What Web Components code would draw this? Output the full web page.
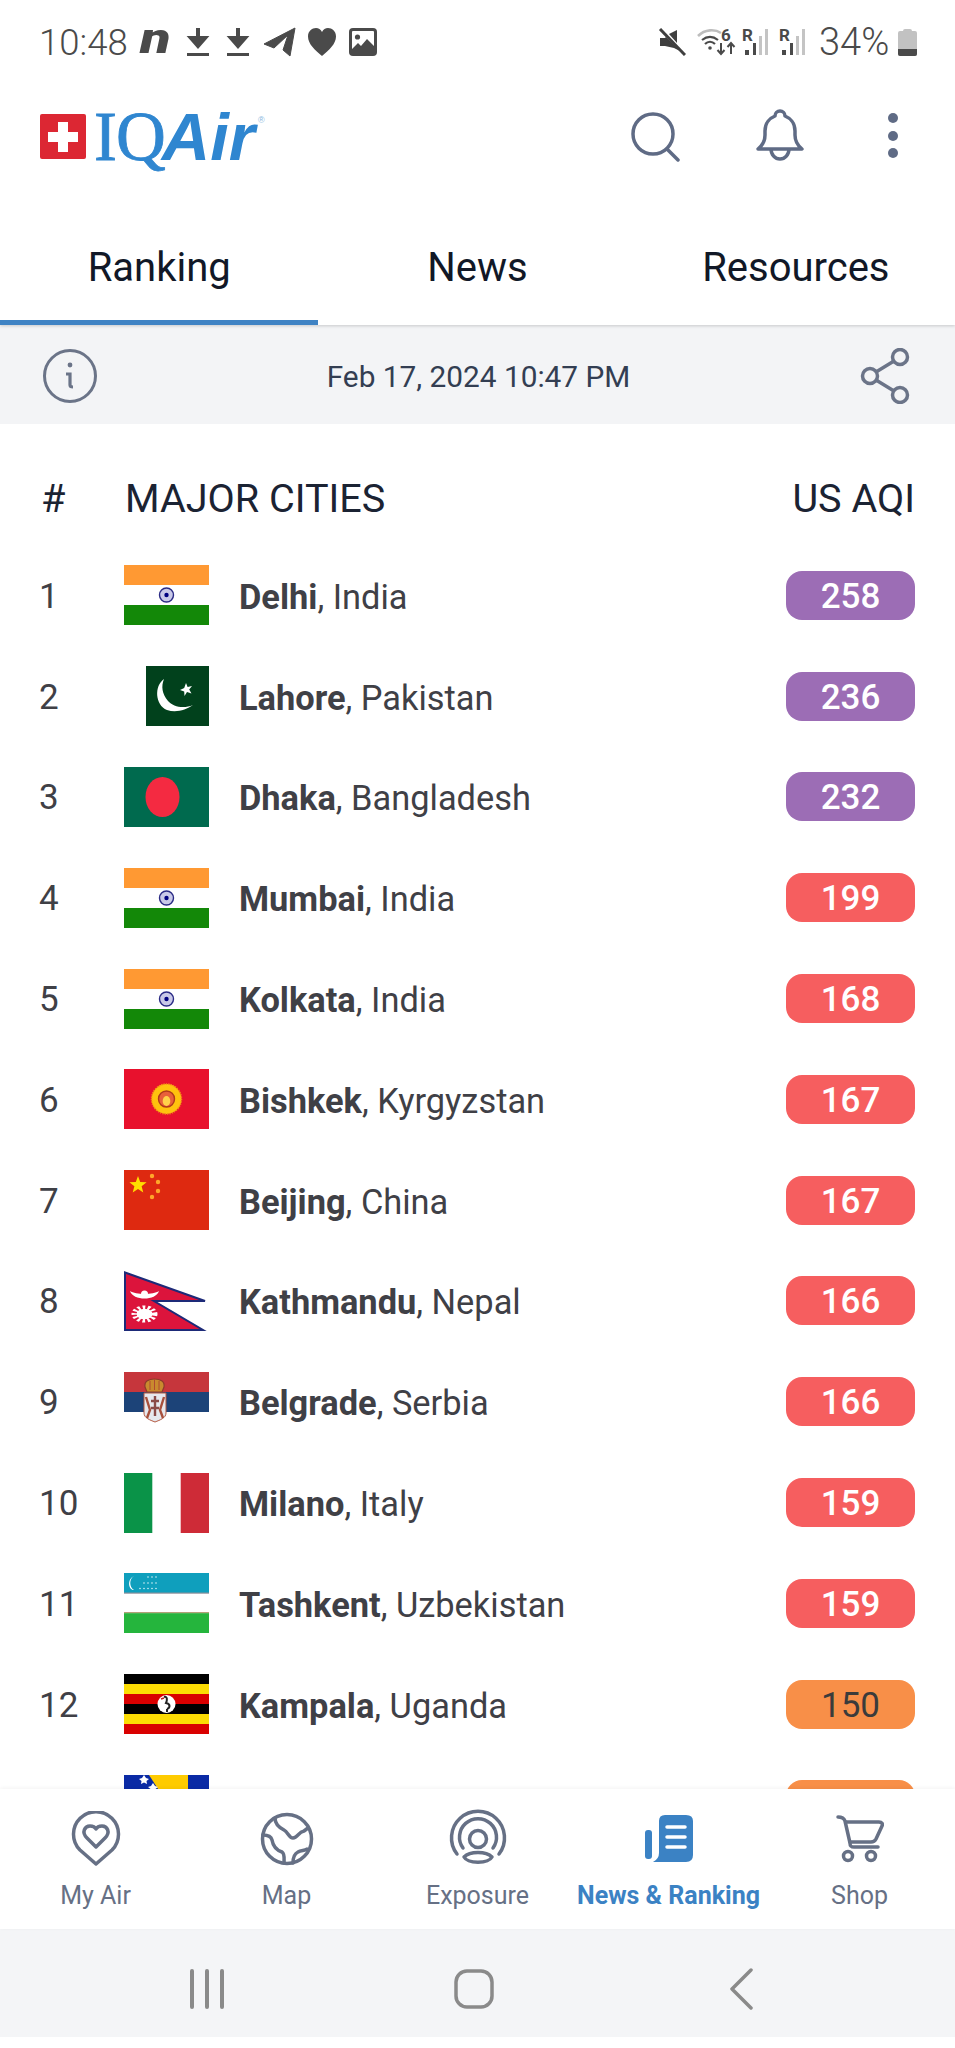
<!DOCTYPE html>
<html>
<head>
<meta charset="utf-8">
<title>IQAir ranking</title>
<style>
    html, body { margin: 0; padding: 0; background: #fff; }
    body { font-family: Roboto, "Liberation Sans", sans-serif; }
    app-screen { height: 2048px; }
</style>
</head>
<body>
<app-screen>
    <status-bar slot="status"></status-bar>
    <app-header slot="header"></app-header>
    <tab-bar slot="tabs"></tab-bar>
    <info-bar slot="info"></info-bar>
    <ranking-list slot="content">
        <city-row rank="1" flag="in" aqi="258" level="purple"><b>Delhi</b>, India</city-row>
        <city-row rank="2" flag="pk" aqi="236" level="purple"><b>Lahore</b>, Pakistan</city-row>
        <city-row rank="3" flag="bd" aqi="232" level="purple"><b>Dhaka</b>, Bangladesh</city-row>
        <city-row rank="4" flag="in" aqi="199" level="red"><b>Mumbai</b>, India</city-row>
        <city-row rank="5" flag="in" aqi="168" level="red"><b>Kolkata</b>, India</city-row>
        <city-row rank="6" flag="kg" aqi="167" level="red"><b>Bishkek</b>, Kyrgyzstan</city-row>
        <city-row rank="7" flag="cn" aqi="167" level="red"><b>Beijing</b>, China</city-row>
        <city-row rank="8" flag="np" aqi="166" level="red"><b>Kathmandu</b>, Nepal</city-row>
        <city-row rank="9" flag="rs" aqi="166" level="red"><b>Belgrade</b>, Serbia</city-row>
        <city-row rank="10" flag="it" aqi="159" level="red"><b>Milano</b>, Italy</city-row>
        <city-row rank="11" flag="uz" aqi="159" level="red"><b>Tashkent</b>, Uzbekistan</city-row>
        <city-row rank="12" flag="ug" aqi="150" level="orange"><b>Kampala</b>, Uganda</city-row>
        <city-row flag="ba" level="orange"></city-row>
    </ranking-list>
    <bottom-nav slot="nav"></bottom-nav>
    <system-nav slot="system"></system-nav>
</app-screen>

<script>
const FLAGS = {
    in: `<svg width="85" height="60" viewBox="0 0 85 60"><rect width="85" height="60" fill="#fff"/><rect width="85" height="20" fill="#ff9933"/><rect y="40" width="85" height="20" fill="#138808"/><circle cx="42.5" cy="30" r="7" fill="#c9c9e8" stroke="#2a2a85" stroke-width="1.4"/><circle cx="42.5" cy="30" r="2.2" fill="#000080"/></svg>`,
    pk: `<svg width="63" height="60" viewBox="0 0 63 60"><rect width="63" height="60" fill="#01411c"/><path d="M18 13 C8 20 9 39 21 44 C30 47 40 44 47 39 C38 43 27 41 22 35 C16 28 15 20 18 13 Z" fill="#fff"/><path d="M40 17 L41.6 21 L46 20 L43.2 23.5 L45.5 27.5 L41 26 L38.5 30 L38.2 25.5 L34 24 L38.2 22 Z" fill="#fff"/></svg>`,
    bd: `<svg width="85" height="60" viewBox="0 0 85 60"><rect width="85" height="60" fill="#006a4e"/><ellipse cx="38.5" cy="30" rx="17" ry="20" fill="#f42a41"/></svg>`,
    kg: `<svg width="85" height="60" viewBox="0 0 85 60"><rect width="85" height="60" fill="#e8112d"/><circle cx="42.5" cy="30" r="15" fill="#ffc20e" stroke="#f08a1a" stroke-width="1.5" stroke-dasharray="1.2 1.2"/><circle cx="42.5" cy="30" r="10.5" fill="#ffc20e"/><circle cx="42.5" cy="30" r="8" fill="#e8603a" stroke="#b03a1a" stroke-width="1.4"/><ellipse cx="42.5" cy="32" rx="3.8" ry="5" fill="#ffd24a"/></svg>`,
    cn: `<svg width="85" height="60" viewBox="0 0 85 60"><rect width="85" height="60" fill="#de2910"/><polygon points="14,6 16.2,12 22.6,12.3 17.6,16.3 19.3,22.5 14,19 8.7,22.5 10.4,16.3 5.4,12.3 11.8,12" fill="#ffde00"/><g fill="#ffa62a"><circle cx="28" cy="6" r="2.2"/><circle cx="34" cy="12" r="2.2"/><circle cx="34" cy="21" r="2.2"/><circle cx="28" cy="27" r="2.2"/></g></svg>`,
    np: `<svg width="85" height="60" viewBox="0 0 85 60"><path d="M1 1.5 L81 30 L30 30 L79 59 L1 59 Z" fill="#dc143c" stroke="#1d2a78" stroke-width="2"/><path d="M6 20 C12 24 29 24 35 20 C32 30 9 30 6 20 Z" fill="#fff"/><circle cx="20.5" cy="23" r="3.5" fill="#fff"/><g transform="translate(20.5 43) scale(1 .66)"><circle r="8" fill="#fff"/><circle r="10" fill="none" stroke="#fff" stroke-width="6" stroke-dasharray="2.6 2.4"/></g></svg>`,
    rs: `<svg width="85" height="60" viewBox="0 0 85 60"><rect width="85" height="60" fill="#fff"/><rect width="85" height="20" fill="#c6363c"/><rect y="20" width="85" height="20" fill="#1c4378"/><path d="M21 15 C20 9 25 7 30.500 7 C36 7 41 9 40 15 L38 20 H23 Z" fill="#c98a2e" stroke="#8d3b2c" stroke-width="1.200"/><path d="M26 9 V18 M30.500 7 V18 M35 9 V18" stroke="#b04a30" stroke-width="1"/><path d="M20 21 H42 V41 C42 46 36 48 31 50 C26 48 20 46 20 41 Z" fill="#e6e8ee" stroke="#b4573f" stroke-width="1"/><path d="M22 25 L26 38 L23 46 M40 25 L36 38 L39 46" stroke="#a8503c" stroke-width="2.400" fill="none"/><path d="M31 24 V44 M27 29 H35 M27 36 H35" stroke="#8a4a48" stroke-width="2.400" fill="none"/></svg>`,
    it: `<svg width="85" height="60" viewBox="0 0 85 60"><rect width="85" height="60" fill="#fff"/><rect width="28.3" height="60" fill="#0a9348"/><rect x="56.7" width="28.3" height="60" fill="#ce2b37"/></svg>`,
    uz: `<svg width="85" height="60" viewBox="0 0 85 60"><rect width="85" height="60" fill="#fff"/><rect width="85" height="20" fill="#0f9fbd"/><rect y="19.5" width="85" height="1.2" fill="#8a8f9a"/><rect y="39.2" width="85" height="1.2" fill="#a08a55"/><rect y="40.2" width="85" height="19.8" fill="#25b53d"/><path d="M10 3 C5 6 5 14 10 17 C4 17 3 6 10 3 Z" fill="#fff"/><g fill="#d5f1f6"><circle cx="24" cy="4" r=".8"/><circle cx="28" cy="4" r=".8"/><circle cx="32" cy="4" r=".8"/><circle cx="20" cy="10" r=".8"/><circle cx="24" cy="10" r=".8"/><circle cx="28" cy="10" r=".8"/><circle cx="32" cy="10" r=".8"/><circle cx="16" cy="15.5" r=".8"/><circle cx="20" cy="15.5" r=".8"/><circle cx="24" cy="15.5" r=".8"/><circle cx="28" cy="15.5" r=".8"/><circle cx="32" cy="15.5" r=".8"/></g></svg>`,
    ug: `<svg width="85" height="60" viewBox="0 0 85 60"><rect width="85" height="10" fill="#000"/><rect y="10" width="85" height="10" fill="#fcdc04"/><rect y="20" width="85" height="10" fill="#d90000"/><rect y="30" width="85" height="10" fill="#000"/><rect y="40" width="85" height="10" fill="#fcdc04"/><rect y="50" width="85" height="10" fill="#d90000"/><circle cx="42.5" cy="30" r="9" fill="#fff"/><path d="M40 23 C44 22 43 27 42 29 C47 30 46 34 43 35 M43 35 V38" stroke="#222" stroke-width="2" fill="none"/><path d="M40 24 L37 25" stroke="#b52020" stroke-width="1.5"/></svg>`,
    ba: `<svg width="85" height="60" viewBox="0 0 85 60"><rect width="85" height="60" fill="#0a2aa5"/><polygon points="25,0 64,0 64,60" fill="#fecb00"/><g fill="#fff"><polygon points="20,0 22,3 25,4 22.5,6 23,9 20,7.5 17,9 17.5,6 15,4 18,3"/><polygon points="29,8 31,11 34,12 31.5,14 32,17 29,15.5 26,17 26.5,14 24,12 27,11"/></g></svg>`
};

function cloneOf(html) {
    const t = document.createElement('template');
    t.innerHTML = html;
    return t.content.cloneNode(true);
}

class AppScreen extends HTMLElement {
    constructor() {
        super();
        this.attachShadow({ mode: 'open' });
        this.shadowRoot.innerHTML = `
            <style>
                :host { display: flex; flex-direction: column; background: #fff; overflow: hidden; }
                .content { flex: 1; min-height: 0; overflow: hidden; }
                .foot { height: 11px; background: #fff; }
            </style>
            <slot name="status"></slot>
            <slot name="header"></slot>
            <slot name="tabs"></slot>
            <slot name="info"></slot>
            <div class="content"><slot name="content"></slot></div>
            <slot name="nav"></slot>
            <slot name="system"></slot>
            <div class="foot"></div>
        `;
    }
}

class StatusBar extends HTMLElement {
    constructor() {
        super();
        this.attachShadow({ mode: 'open' });
        this.shadowRoot.innerHTML = `
            <style>
                :host {
                    display: flex;
                    align-items: center;
                    justify-content: space-between;
                    height: 84px;
                    padding: 0 38px 0 39px;
                    color: #4a4a4a;
                    font: 300 36.500px Roboto, sans-serif;
                }
                .side { display: flex; align-items: center; }
                svg { display: block; }
                .time { width: 87px; white-space: nowrap; }
                .n { font: italic 900 43px/42px Roboto, sans-serif; width: 32px; margin: -8px 0 0 14px; transform: scaleX(1.300); transform-origin: left center; }
                .pct { width: 72px; margin: 0 7px 0 13px; font-size: 38px; white-space: nowrap; }
                .mark { font: 700 17px/17px Roboto, sans-serif; fill: #4a4a4a; }
            </style>
            <div class="side">
                <span class="time">10:48</span>
                <span class="n">n</span>
                <svg width="24" height="32" viewBox="0 0 24 32" style="margin-left:14px"><path d="M12 2 V17 M5 12 L12 20 L19 12 Z" stroke="#4a4a4a" stroke-width="4" fill="#4a4a4a"/><rect x="1" y="27" width="22" height="3" fill="#4a4a4a"/></svg>
                <svg width="24" height="32" viewBox="0 0 24 32" style="margin-left:16px"><path d="M12 2 V17 M5 12 L12 20 L19 12 Z" stroke="#4a4a4a" stroke-width="4" fill="#4a4a4a"/><rect x="1" y="27" width="22" height="3" fill="#4a4a4a"/></svg>
                <svg width="32" height="30" viewBox="0 0 32 30" style="margin-left:14px"><path d="M0 17 L31 1 L26 29 L19 23 L24 8 L10 21 Z" fill="#4a4a4a" stroke="#4a4a4a" stroke-linejoin="round"/></svg>
                <svg width="30" height="30" viewBox="0 0 30 30" style="margin-left:11px"><path d="M15 29 C8 23 1 17 1 9.500 C1 4 5 1 9 1 C11.500 1 13.800 2.500 15 5 C16.200 2.500 18.500 1 21 1 C25 1 29 4 29 9.500 C29 17 22 23 15 29 Z" fill="#4a4a4a"/></svg>
                <svg width="28" height="28" viewBox="0 0 28 28" style="margin-left:12px"><rect width="28" height="28" rx="4" fill="#4a4a4a"/><rect x="3" y="3" width="22" height="22" rx="1" fill="#fff"/><circle cx="8.500" cy="9" r="2.600" fill="#4a4a4a"/><path d="M3 21 L9 15 L12 18 L18 11 L25 18 V25 H3 Z" fill="#4a4a4a"/></svg>
            </div>
            <div class="side">
                <svg width="28" height="28" viewBox="0 0 28 28"><path d="M2 10 H7 L8 9 L22 23 L16 20 L7 18 H2 Z M19 2 V15 L11 6 Z" fill="#3f3f3f"/><path d="M2 1 L27 27" stroke="#3f3f3f" stroke-width="3"/></svg>
                <svg width="42" height="37" viewBox="0 -7 42 37" style="margin:-7px -2px 0 11px"><path d="M1 9 C8 2 18 2 24 6" stroke="#bdbdbd" stroke-width="2.600" fill="none"/><path d="M5 13 C10 9 16 9 21 13 M8 17 C11 14 15 14 18 17" stroke="#4a4a4a" stroke-width="2.200" fill="none"/><circle cx="13" cy="21" r="1.800" fill="#4a4a4a"/><text x="24" y="14" class="mark">6</text><path d="M24 16 V27 M20.500 23 L24 27 L27.500 23 M34 27 V16 M30.500 20 L34 16 L37.500 20" stroke="#4a4a4a" stroke-width="2" fill="none"/></svg>
                <svg width="27" height="35" viewBox="0 -7 27 35" style="margin:-7px 0 0 5px"><text x="0" y="13" class="mark">R</text><rect x="3" y="22" width="4" height="5" fill="#4a4a4a"/><rect x="11" y="15" width="3" height="12" fill="#4a4a4a"/><rect x="17" y="8" width="3" height="19" fill="#c4c4c4"/><rect x="23" y="1" width="3" height="26" fill="#c4c4c4"/></svg>
                <svg width="27" height="35" viewBox="0 -7 27 35" style="margin:-7px 0 0 10px"><text x="0" y="13" class="mark">R</text><rect x="3" y="22" width="4" height="5" fill="#4a4a4a"/><rect x="11" y="15" width="3" height="12" fill="#4a4a4a"/><rect x="17" y="8" width="3" height="19" fill="#c4c4c4"/><rect x="23" y="1" width="3" height="26" fill="#c4c4c4"/></svg>
                <span class="pct">34%</span>
                <svg width="19" height="28" viewBox="0 0 19 28"><path d="M5 3 Q5 1 7 1 H12 Q14 1 14 3 H17 Q19 3 19 5 V26 Q19 28 17 28 H2 Q0 28 0 26 V5 Q0 3 2 3 Z" fill="#c2c2c2"/><path d="M0 21 H19 V26 Q19 28 17 28 H2 Q0 28 0 26 Z" fill="#4a4a4a"/></svg>
            </div>
        `;
    }
}

class AppHeader extends HTMLElement {
    constructor() {
        super();
        this.attachShadow({ mode: 'open' });
        this.shadowRoot.innerHTML = `
            <style>
                :host {
                    display: flex;
                    align-items: center;
                    height: 104px;
                    padding: 0 57px 0 40px;
                }
                svg { display: block; }
                .logo { display: flex; align-items: flex-start; align-self: flex-start; color: #2f86d0; height: 72px; flex: 1; margin-top: 27px; }
                .cross { margin: 3px 8px 0 0; }
                .iq { font: 400 69px/62px "Liberation Serif", serif; letter-spacing: -1px; margin-top: -5px; -webkit-text-stroke: .8px #2f86d0; }
                .air { font: italic 700 67px/62px "Liberation Sans", sans-serif; margin: -5px 0 0 -3px; }
                .reg { font: 400 9px/12px "Liberation Sans", sans-serif; color: #8ab8e0; margin: 3px 0 0 3px; }
                .bell { margin-left: 74px; }
                .dots { margin-left: 84px; }
            </style>
            <div class="logo">
                <svg class="cross" width="46" height="45" viewBox="0 0 46 45"><rect width="46" height="45" rx="2" fill="#dc2733"/><path d="M18 8 H28 V18 H38 V28 H28 V38 H18 V28 H8 V18 H18 Z" fill="#fff"/></svg>
                <span class="iq">IQ</span><span class="air">Air</span><span class="reg">®</span>
            </div>
            <svg width="52" height="52" viewBox="0 0 52 52" fill="none" stroke="#5f6b85" stroke-width="3.500" stroke-linecap="round"><circle cx="23" cy="24" r="20"/><path d="M37 39 L48 50"/></svg>
            <svg class="bell" width="48" height="54" viewBox="0 0 48 54" fill="none" stroke="#5f6b85" stroke-width="3.500" stroke-linejoin="round"><path d="M2 40 C7 36 9 32 9 26 V22 C9 14 14 9 19 7 A5 5 0 0 1 29 7 C34 9 39 14 39 22 V26 C39 32 41 36 46 40 Z"/><path d="M15 40 A9 10 0 0 0 33 40"/></svg>
            <svg class="dots" width="10" height="46" viewBox="0 0 10 46" fill="#5f6b85"><circle cx="5" cy="5" r="5"/><circle cx="5" cy="23" r="5"/><circle cx="5" cy="40" r="5"/></svg>
        `;
    }
}

class TabBar extends HTMLElement {
    constructor() {
        super();
        this.attachShadow({ mode: 'open' });
        this.shadowRoot.innerHTML = `
            <style>
                :host {
                    display: grid;
                    grid-template-columns: repeat(3, 1fr);
                    position: relative;
                    z-index: 1;
                    background: #fff;
                    box-shadow: 0 1px 3px rgba(0, 0, 0, .18);
                    clip-path: inset(0 0 -6px 0);
                    font: 400 40px/48px Roboto, sans-serif;
                    color: #111827;
                }
                div { padding: 56px 0 28px; height: 48px; margin-bottom: 5px; text-align: center; }
                .active { border-bottom: 5px solid #3f83c4; margin-bottom: 0; }
            </style>
            <div class="active">Ranking</div>
            <div>News</div>
            <div>Resources</div>
        `;
    }
}

class InfoBar extends HTMLElement {
    constructor() {
        super();
        this.attachShadow({ mode: 'open' });
        this.shadowRoot.innerHTML = `
            <style>
                :host {
                    display: flex;
                    align-items: center;
                    justify-content: space-between;
                    box-sizing: border-box;
                    height: 99px;
                    padding: 2px 44px 0 42px;
                    background: #f3f4f6;
                    color: #333e52;
                    font: 400 29.800px Roboto, sans-serif;
                }
                svg { display: block; }
                span { padding-top: 2px; }
            </style>
            <svg width="56" height="56" viewBox="0 0 56 56" fill="none" stroke="#6b7488" stroke-width="3"><circle cx="28" cy="28" r="25.500"/><circle cx="28" cy="17" r="2.400" fill="#6b7488" stroke="none"/><path d="M24 26 H28 V37 Q28 39 31 39" stroke-width="3.200"/></svg>
            <span>Feb 17, 2024 10:47 PM</span>
            <svg width="52" height="56" viewBox="0 0 52 56" fill="none" stroke="#6b7488" stroke-width="3.500"><circle cx="41" cy="9" r="7.500"/><circle cx="11" cy="28" r="7.500"/><circle cx="41" cy="47" r="7.500"/><path d="M35 13 L17 24 M17 32 L35 43"/></svg>
        `;
    }
}

class RankingList extends HTMLElement {
    constructor() {
        super();
        this.attachShadow({ mode: 'open' });
        this.shadowRoot.innerHTML = `
            <style>
                :host { display: block; padding: 48px 40px 0 41px; color: #1b2333; }
                .head {
                    display: flex;
                    align-items: center;
                    height: 52px;
                    margin-bottom: 21px;
                    font: 400 39.600px/52px Roboto, sans-serif;
                }
                .head span { padding-top: 2px; }
                .head .num { width: 84px; }
                .head .title { flex: 1; }
            </style>
            <div class="head">
                <span class="num">#</span>
                <span class="title">MAJOR CITIES</span>
                <span>US AQI</span>
            </div>
            <slot></slot>
        `;
    }
}

class CityRow extends HTMLElement {
    constructor() {
        super();
        this.attachShadow({ mode: 'open' });
    }

    connectedCallback() {
        const flag = this.getAttribute('flag');
        const rank = this.getAttribute('rank') || '';
        const aqi = this.getAttribute('aqi') || '';
        const level = this.getAttribute('level');

        this.shadowRoot.innerHTML = `
            <style>
                :host {
                    display: flex;
                    align-items: center;
                    height: 100.800px;
                    margin-left: -2px;
                    color: #3f4046;
                    font: 400 35px Roboto, sans-serif;
                }
                .rank { width: 84px; padding-top: 2px; }
                .flag { width: 86px; height: 60px; display: flex; justify-content: flex-end; }
                .flag svg { display: block; overflow: visible; }
                .name { flex: 1; margin-left: 30px; padding-top: 3px; font-size: 34.400px; }
                ::slotted(b) { font-weight: 700; }
                .aqi {
                    box-sizing: border-box;
                    width: 129px;
                    height: 49px;
                    padding-top: 2px;
                    border-radius: 16px;
                    display: flex;
                    align-items: center;
                    justify-content: center;
                    font-weight: 500;
                }
                .purple { background: #9c6db5; color: #fff; }
                .red { background: #f65e5f; color: #fff; }
                .orange { background: #f88f48; color: #3b3b3b; font-weight: 400; }
            </style>
            <span class="rank">${rank}</span>
            <span class="flag">${FLAGS[flag]}</span>
            <span class="name"><slot></slot></span>
            <span class="aqi ${level}">${aqi}</span>
        `;
    }
}

class NavItem extends HTMLElement {
    constructor() {
        super();
        this.attachShadow({ mode: 'open' });
        this.shadowRoot.innerHTML = `
            <style>
                :host {
                    display: flex;
                    flex-direction: column;
                    align-items: center;
                    color: #667085;
                    font: 400 25px/30px Roboto, sans-serif;
                    white-space: nowrap;
                }
                :host([active]) { color: #3b82c4; font-weight: 700; }
                .icon { height: 64px; display: flex; align-items: center; justify-content: center; }
                ::slotted(svg) { display: block; }
                .label { margin-top: 10px; }
            </style>
            <div class="icon"><slot name="icon"></slot></div>
            <div class="label"><slot></slot></div>
        `;
    }
}

class BottomNav extends HTMLElement {
    constructor() {
        super();
        this.attachShadow({ mode: 'open' });
        this.shadowRoot.innerHTML = `
            <style>
                :host {
                    display: grid;
                    grid-template-columns: repeat(5, 1fr);
                    box-sizing: border-box;
                    height: 140px;
                    padding-top: 18px;
                    background: #fff;
                    position: relative;
                    box-shadow: 0 -1px 4px rgba(0, 0, 0, .05);
                }
            </style>
            <slot></slot>
        `;
        const stroke = 'fill="none" stroke="#667085" stroke-width="3.500" stroke-linecap="round" stroke-linejoin="round"';
        this.appendChild(cloneOf(`
            <nav-item><svg slot="icon" width="50" height="56" viewBox="0 0 50 56" ${stroke}><path d="M25 53 L9 39 A22.500 22.500 0 1 1 41 39 Z"/><path d="M25 36 L16 27 C10 21 14 15 19 15 C22 15 24 16 25 18 C26 16 28 15 31 15 C36 15 40 21 34 27 Z"/></svg>My Air</nav-item>
            <nav-item><svg slot="icon" width="54" height="54" viewBox="0 0 54 54" ${stroke}><circle cx="27" cy="27" r="24.500"/><path d="M15 6 C15 12 20 16 24 18 C28 20 29 26 33 26 C38 26 38 20 44 19 L48 16"/><path d="M3 23 C7 23 11 24 12 28 C13 34 16 38 22 40 C25 42 24 47 24 51"/><path d="M33 51 C33 46 34 42 38 40 C41 38 45 39 47 37"/></svg>Map</nav-item>
            <nav-item><svg slot="icon" width="60" height="60" viewBox="0 0 60 60" ${stroke}><path d="M9 45 A26.500 26.500 0 1 1 51 45"/><path d="M15 39 A18.500 18.500 0 1 1 45 39"/><circle cx="30" cy="30" r="8.500"/><path d="M16 48 C22 42 38 42 44 48 C40 55 20 55 16 48 Z"/></svg>Exposure</nav-item>
            <nav-item active><svg slot="icon" width="48" height="48" viewBox="0 0 48 48"><rect x="0" y="15" width="7" height="29" rx="3" fill="#3b82c4"/><path d="M14 6 Q14 0 20 0 H41 Q48 0 48 6 V40 Q48 47 41 47 H8 Q14 44 14 38 Z" fill="#3b82c4"/><path d="M22 12 H40 M22 22 H40 M22 32 H40" stroke="#fff" stroke-width="3.500" stroke-linecap="round"/></svg>News &amp; Ranking</nav-item>
            <nav-item><svg slot="icon" width="48" height="48" viewBox="0 0 48 48" ${stroke}><path d="M2 2 C6 2 8 3 9 6 L14 28 C14 31 15 32 18 32 H42"/><path d="M10 7 H43 C46 7 47 9 46 11 L40 24 C39 26 38 27 35 27 H14"/><circle cx="12" cy="41" r="4.500"/><circle cx="35" cy="41" r="4.500"/></svg>Shop</nav-item>
        `));
    }
}

class SystemNav extends HTMLElement {
    constructor() {
        super();
        this.attachShadow({ mode: 'open' });
        this.shadowRoot.innerHTML = `
            <style>
                :host {
                    display: grid;
                    grid-template-columns: 1fr 1fr 1fr;
                    align-items: center;
                    justify-items: center;
                    box-sizing: border-box;
                    height: 108px;
                    padding: 11px 81px 0 73px;
                    background: #f4f5f7;
                }
                svg { display: block; }
            </style>
            <svg width="36" height="40" viewBox="0 0 36 40" stroke="#8a8a8a" stroke-width="4" stroke-linecap="round"><path d="M3 2 V38 M18 2 V38 M33 2 V38"/></svg>
            <svg width="40" height="40" viewBox="0 0 40 40" fill="none" stroke="#8a8a8a" stroke-width="3.500"><rect x="2" y="2" width="36" height="36" rx="11"/></svg>
            <svg width="24" height="42" viewBox="0 0 24 42" fill="none" stroke="#8a8a8a" stroke-width="3.500" stroke-linecap="round" stroke-linejoin="round"><path d="M22 2 L3 21 L22 40"/></svg>
        `;
    }
}

customElements.define('app-screen', AppScreen);
customElements.define('status-bar', StatusBar);
customElements.define('app-header', AppHeader);
customElements.define('tab-bar', TabBar);
customElements.define('info-bar', InfoBar);
customElements.define('ranking-list', RankingList);
customElements.define('city-row', CityRow);
customElements.define('nav-item', NavItem);
customElements.define('bottom-nav', BottomNav);
customElements.define('system-nav', SystemNav);
</script>
</body>
</html>
